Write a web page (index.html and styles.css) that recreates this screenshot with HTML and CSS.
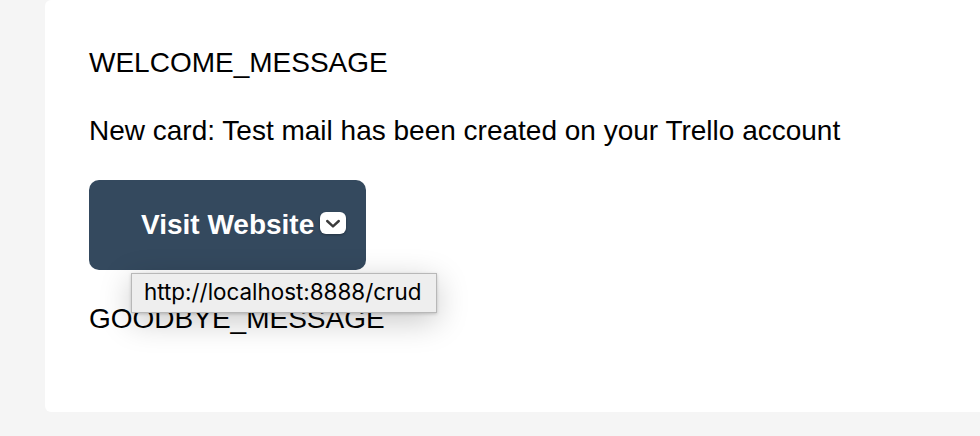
FILE: index.html
```html
<!DOCTYPE html>
<html lang="en">
<head>
<meta charset="utf-8">
<title>Trello notification</title>
<link rel="stylesheet" href="styles.css">
</head>
<body>
<main class="card">
  <p class="line"><span class="welcome">WELCOME_MESSAGE</span></p>
  <p class="line"><span class="body-text">New card: Test mail has been created on your Trello account</span></p>
  <div class="action">
    <a class="button" href="#"><span class="label">Visit Website</span><svg class="chevron" viewBox="0 0 26 22"><rect width="26" height="22" rx="6" fill="#fff"/><path d="M7.200 9l5.800 5.400L18.800 9" fill="none" stroke="#3b3b3b" stroke-width="2.4" stroke-linecap="round" stroke-linejoin="round"/></svg></a>
    <div class="tooltip"><span class="url">http://localhost:8888/crud</span></div>
  </div>
  <p class="line"><span class="goodbye">GOODBYE_MESSAGE</span></p>
</main>
</body>
</html>
```
FILE: styles.css
```css
* { box-sizing: border-box; }
body {
  margin: 0;
  height: 436px;
  padding: 0 0 24px 45px;
  overflow: hidden;
  background: #f5f5f5;
  color: #000;
  font: 28px/34px "Liberation Sans", Arial, sans-serif;
}
.card {
  height: 412px;
  padding: 46px 44px;
  background: #fff;
  border-radius: 6px 0 0 6px;
}
.line { margin: 0 0 34px; white-space: nowrap; }
.action { position: relative; width: 277px; height: 90px; margin: -2px 0 32px; }
.button {
  display: flex;
  align-items: center;
  gap: 6px;
  height: 90px;
  padding-left: 52px;
  border-radius: 10px;
  background: #34495e;
  color: #fff;
  font-weight: 700;
  text-decoration: none;
  white-space: nowrap;
}
.chevron {
  width: 26px;
  height: 22px;
  flex: none;
  margin-bottom: 4px;
  filter: drop-shadow(0 1px 1px rgba(0, 0, 0, .3));
}
.tooltip {
  position: absolute;
  left: 42px;
  top: 93px;
  width: 306px;
  height: 40px;
  padding: 2px 0 0 12px;
  background: #eee;
  border: 1px solid #b8b8b8;
  box-shadow: 0 8px 32px rgba(0, 0, 0, .22), 0 1px 3px rgba(0, 0, 0, .18);
  font: 22.4px/32px Inter, sans-serif;
  white-space: nowrap;
}
```
